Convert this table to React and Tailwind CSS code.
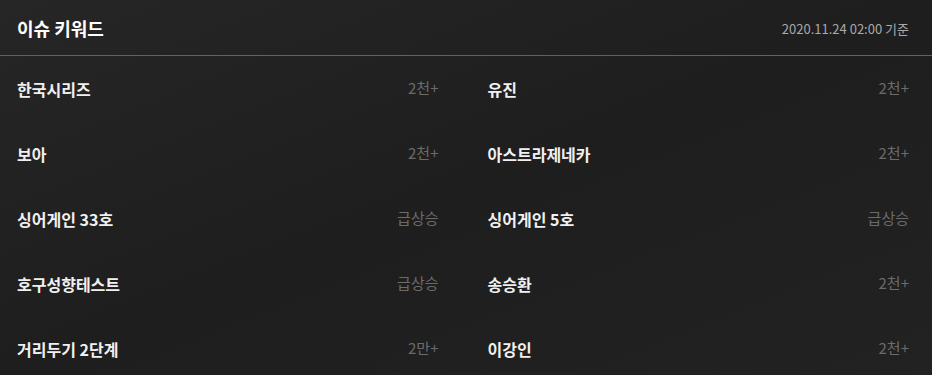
// App.jsx – 이슈 키워드 panel
const KEYWORDS = [
    { name: '한국시리즈', value: '2천+' },
    { name: '유진', value: '2천+' },
    { name: '보아', value: '2천+' },
    { name: '아스트라제네카', value: '2천+' },
    { name: '싱어게인 33호', value: '급상승' },
    { name: '싱어게인 5호', value: '급상승' },
    { name: '호구성향테스트', value: '급상승' },
    { name: '송승환', value: '2천+' },
    { name: '거리두기 2단계', value: '2만+' },
    { name: '이강인', value: '2천+' },
]

export default function App() {
    return (
        <div
            className="w-[932px] h-[375px] overflow-hidden bg-gradient-to-br from-[#262626] via-[#1e1e1e] to-[#222222] text-[#eeeeee]"
            style={{ fontFamily: '"Noto Sans CJK KR", "Noto Sans", sans-serif' }}
        >
            <div className="h-[56px] flex items-center justify-between pl-[17px] pr-[23px] border-b border-[#626262]">
                <h2 className="text-[18px] font-bold text-white pt-[2px]">이슈 키워드</h2>
                <span className="text-[13px] text-[#a9a9a9] pt-[2px]">2020.11.24 02:00 기준</span>
            </div>

            <ul className="grid grid-cols-2 gap-x-[49px] pl-[17px] pr-[23px]">
                {KEYWORDS.map(({ name, value }) => (
                    <li key={name} className="h-[65px] flex items-center justify-between">
                        <span className="text-[16px] font-bold text-[#f0f0f0]">{name}</span>
                        <span className="text-[15px] text-[#6b6b6b]">{value}</span>
                    </li>
                ))}
            </ul>
        </div>
    )
}
